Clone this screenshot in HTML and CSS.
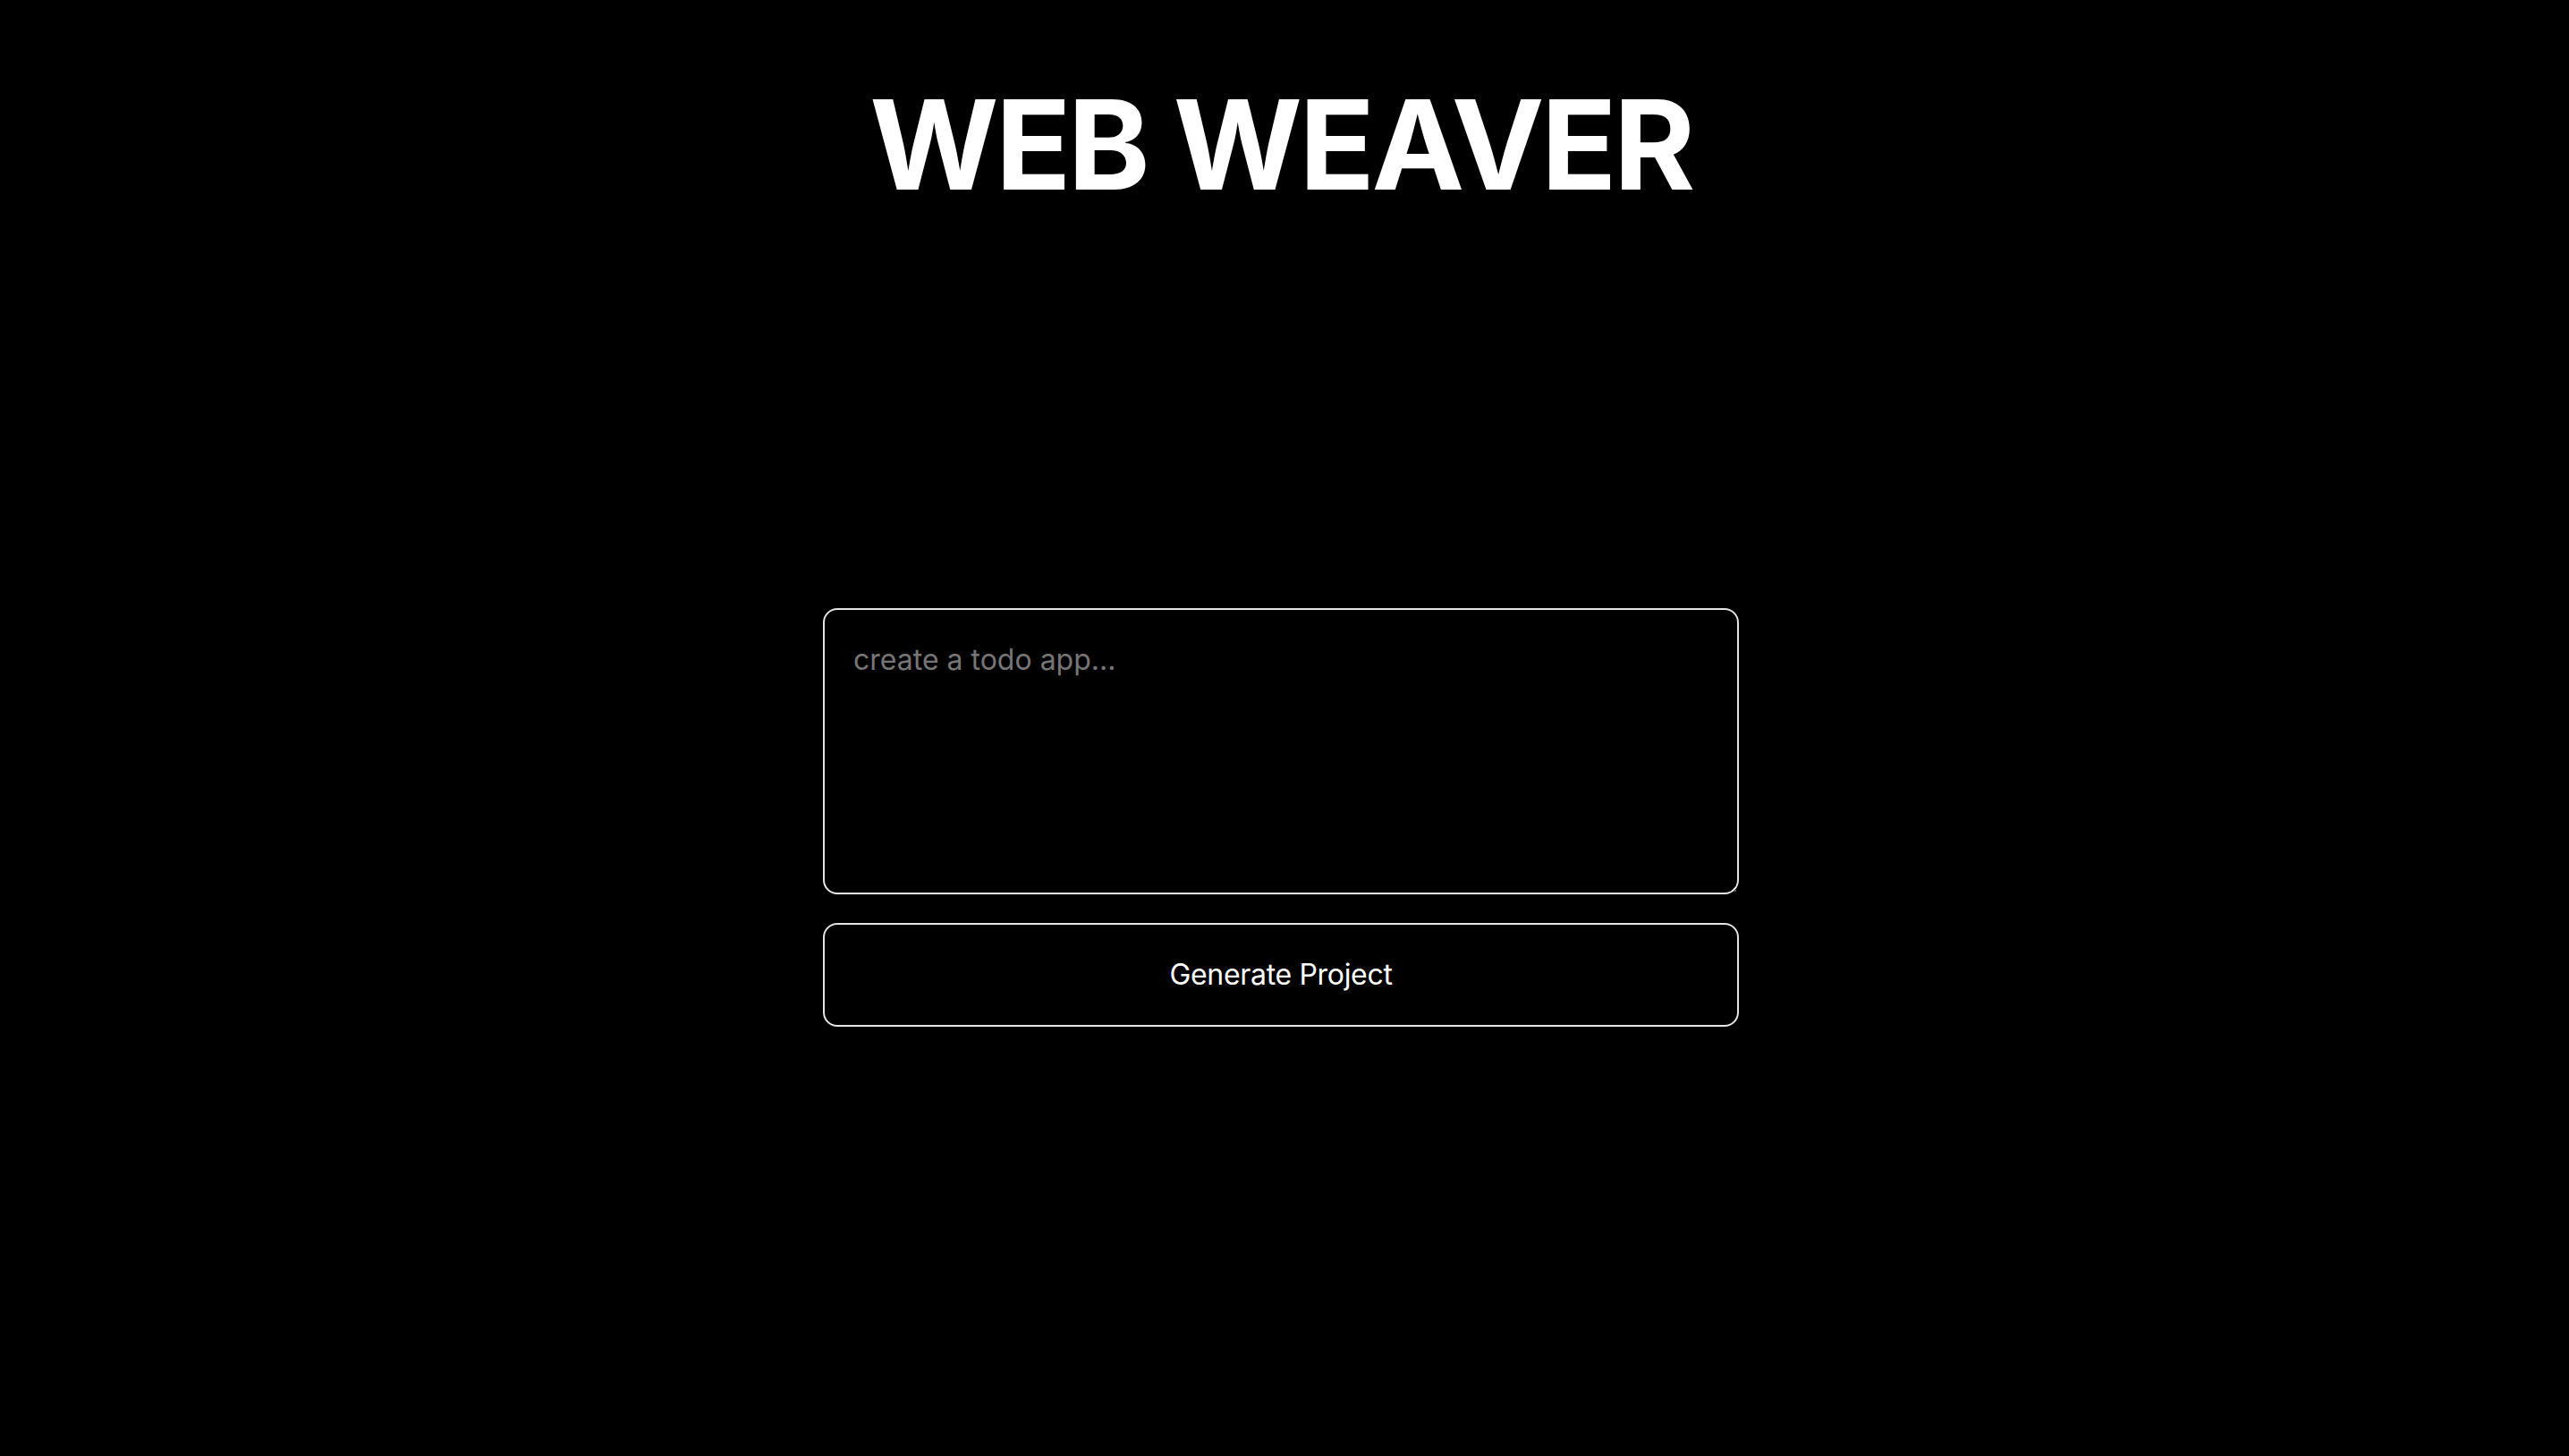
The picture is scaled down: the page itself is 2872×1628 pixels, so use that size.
FILE: index.html
```html
<!DOCTYPE html>
<html lang="en">
<head>
<meta charset="utf-8">
<title>Web Weaver</title>
<link rel="stylesheet" href="styles.css">
</head>
<body>
<main class="page">
  <h1 class="title">WEB WEAVER</h1>
  <form class="form">
    <textarea class="prompt" placeholder="create a todo app..."></textarea>
    <button type="button" class="generate">Generate Project</button>
  </form>
</main>
</body>
</html>
```
FILE: styles.css
```css
html, body {
  margin: 0;
  padding: 0;
  background: #000;
}
body {
  font-family: Inter, "Noto Sans", sans-serif;
  color: #fff;
  min-height: 1628px;
}
.page {
  display: flex;
  flex-direction: column;
  align-items: center;
  padding-top: 92px;
  padding-right: 8px;
}
.title {
  margin: 0;
  font-size: 139px;
  line-height: 1;
  font-weight: 700;
  letter-spacing: -0.025em;
  color: #fff;
}
.form {
  margin-top: 449px;
  width: 1024px;
  display: flex;
  flex-direction: column;
  gap: 32px;
}
.prompt {
  box-sizing: border-box;
  width: 100%;
  height: 320px;
  margin: 0;
  padding: 32px;
  border: 2px solid #e5e5e5;
  border-radius: 16px;
  background: #000;
  color: #fff;
  font-family: inherit;
  font-size: 32px;
  line-height: 1.5;
  outline: none;
  display: block;
}
.prompt::placeholder {
  color: #767676;
}
.generate {
  box-sizing: border-box;
  width: 100%;
  height: 116px;
  margin: 0;
  border: 2px solid #e5e5e5;
  border-radius: 16px;
  background: #000;
  color: #fff;
  font-family: inherit;
  font-size: 32px;
  line-height: 1.5;
  letter-spacing: -0.01em;
  cursor: pointer;
}
```
